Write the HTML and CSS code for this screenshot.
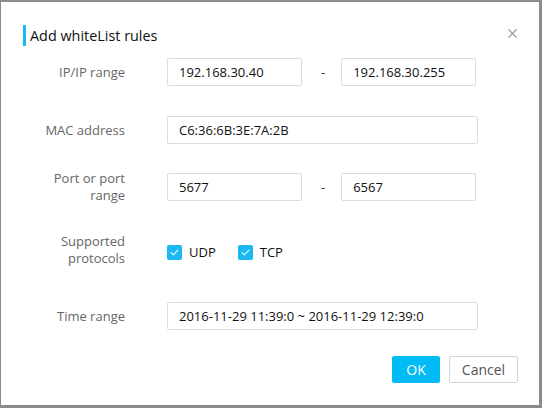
FILE: index.html
```html
<!DOCTYPE html>
<html>
<head>
<meta charset="utf-8">
<link rel="stylesheet" href="styles.css">
</head>
<body>
<div class="dialog">
  <div class="header">
    <div class="title">Add whiteList rules</div>
    <button class="close" aria-label="close">
      <svg width="9" height="9" viewBox="0 0 9 9"><path d="M0.5 0.5L8.5 8.5M8.5 0.5L0.5 8.5" stroke="#9a9a9a" stroke-width="1.1" fill="none"/></svg>
    </button>
  </div>
  <div class="form">
    <div class="row">
      <div class="label">IP/IP range</div>
      <div class="field">
        <input class="input short" type="text" value="192.168.30.40">
        <span class="dash">-</span>
        <input class="input short" type="text" value="192.168.30.255">
      </div>
    </div>
    <div class="row row-mac">
      <div class="label">MAC address</div>
      <div class="field">
        <input class="input long" type="text" value="C6:36:6B:3E:7A:2B">
      </div>
    </div>
    <div class="row row-port">
      <div class="label">Port or port<br>range</div>
      <div class="field">
        <input class="input short" type="text" value="5677">
        <span class="dash">-</span>
        <input class="input short" type="text" value="6567">
      </div>
    </div>
    <div class="row">
      <div class="label">Supported<br>protocols</div>
      <div class="field checks">
        <label class="check"><span class="box"><svg width="9" height="7" viewBox="0 0 9 7"><path d="M0.8 3.4L3.4 5.8L8.2 0.8" stroke="#fff" stroke-width="1.1" fill="none"/></svg></span>UDP</label>
        <label class="check"><span class="box"><svg width="9" height="7" viewBox="0 0 9 7"><path d="M0.8 3.4L3.4 5.8L8.2 0.8" stroke="#fff" stroke-width="1.1" fill="none"/></svg></span>TCP</label>
      </div>
    </div>
    <div class="row row-time">
      <div class="label">Time range</div>
      <div class="field">
        <input class="input long" type="text" value="2016-11-29 11:39:0 ~ 2016-11-29 12:39:0">
      </div>
    </div>
  </div>
  <div class="footer">
    <button class="btn btn-ok">OK</button>
    <button class="btn btn-cancel">Cancel</button>
  </div>
</div>
</body>
</html>
```

FILE: styles.css
```css
html, body {
  margin: 0;
  padding: 0;
}
body {
  width: 542px;
  height: 408px;
  background: #8c8c8c;
  font-family: "Open Sans", "Noto Sans", sans-serif;
  font-size: 13px;
  color: #222;
  box-sizing: border-box;
  padding: 2px 3px 3px 1px;
}
.dialog {
  background: #fff;
  height: 100%;
  box-sizing: border-box;
  padding: 23px 21px 0 0;
  display: flex;
  flex-direction: column;
}
.header {
  display: flex;
  align-items: center;
  justify-content: space-between;
  height: 21px;
  padding-left: 22px;
}
.title {
  border-left: 3px solid #19b8f3;
  padding-left: 4px;
  font-size: 14.4px;
  line-height: 21px;
  color: #111;
}
.close {
  border: 0;
  background: none;
  padding: 0;
  margin-bottom: 4px;
  width: 9px;
  height: 9px;
  display: flex;
  margin-right: 1px;
}
.form {
  margin-top: 12px;
  display: flex;
  flex-direction: column;
  gap: 29px;
}
.row {
  display: flex;
  align-items: center;
  min-height: 28px;
}
.row-mac { margin-top: 1px; }
.row-port { margin-top: -3px; }
.row-time { margin-top: 6px; }
.label {
  width: 124px;
  flex: none;
  text-align: right;
  color: #666;
  line-height: 17px;
}
.field {
  margin-left: 42px;
  display: flex;
  align-items: center;
}
.input {
  font: inherit;
  color: #111;
  height: 28px;
  box-sizing: border-box;
  border: 1px solid #dcdcdc;
  border-radius: 2px;
  padding: 0 11px;
  outline: none;
  background: #fff;
  flex: none;
}
.input.short { width: 135px; }
.input.long { width: 311px; }
.dash {
  flex: none;
  padding: 0 16px 0 19px;
  color: #333;
}
.checks {
  gap: 22px;
  padding-top: 4px;
}
.check {
  display: flex;
  align-items: center;
  gap: 7px;
  color: #111;
}
.box {
  width: 15px;
  height: 15px;
  border-radius: 2px;
  background: #1cb8f4;
  display: flex;
  align-items: center;
  justify-content: center;
}
.footer {
  margin-top: 26px;
  display: flex;
  justify-content: flex-end;
  gap: 9px;
}
.btn {
  font: inherit;
  font-size: 14px;
  height: 27px;
  border-radius: 2px;
  padding: 0;
  cursor: pointer;
}
.btn-ok {
  width: 48px;
  background: #00bbf5;
  border: 1px solid #00bbf5;
  color: #fff;
}
.btn-cancel {
  width: 69px;
  background: #fff;
  border: 1px solid #d4d4d4;
  color: #555;
}
```
